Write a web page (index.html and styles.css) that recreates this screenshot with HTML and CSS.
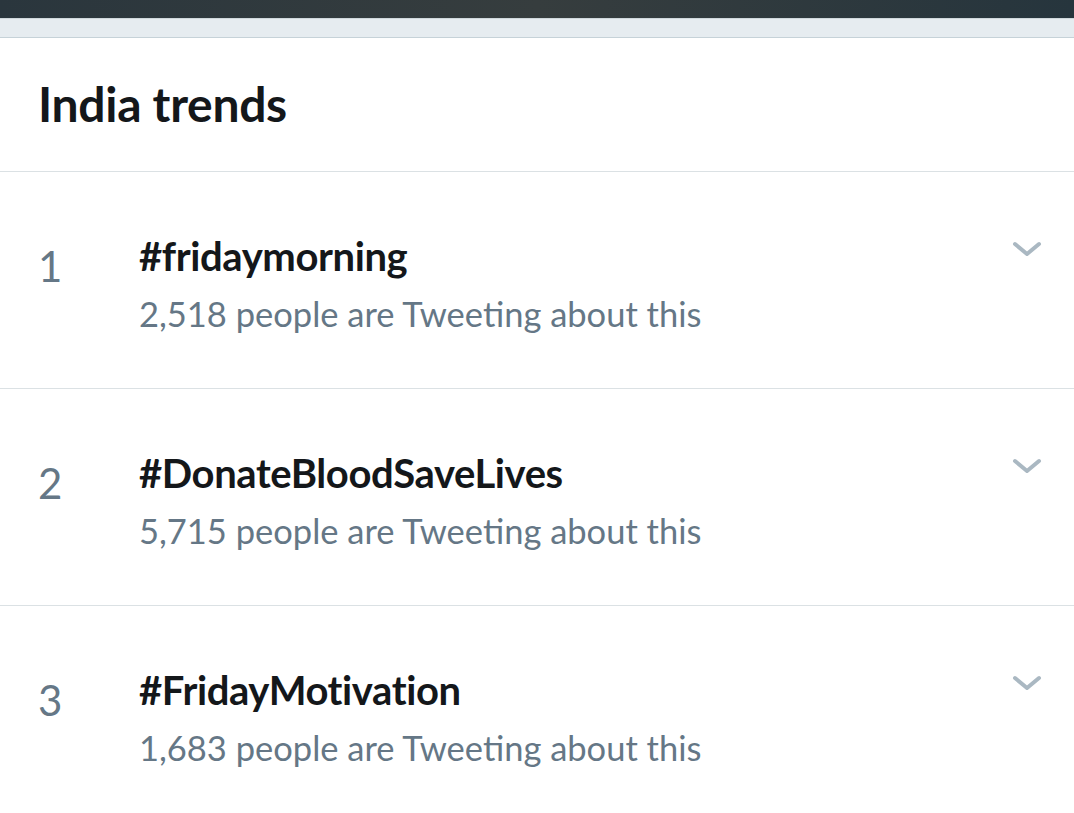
FILE: index.html
```html
<!DOCTYPE html>
<html>
<head>
<meta charset="utf-8">
<link rel="stylesheet" href="styles.css">
</head>
<body>
<div class="topbar"></div>
<div class="subbar"></div>
<main class="panel">
  <header class="panel-header"><h1 class="title">India trends</h1></header>
  <ul class="trends">
    <li class="trend">
      <span class="rank">1</span>
      <div class="info">
        <div class="tag">#fridaymorning</div>
        <div class="count">2,518 people are Tweeting about this</div>
      </div>
      <svg class="chev" viewBox="0 0 32 20" width="32" height="20"><path d="M4 4 L16 14 L28 4" fill="none" stroke="#aab8c2" stroke-width="4" stroke-linecap="round" stroke-linejoin="round"/></svg>
    </li>
    <li class="trend">
      <span class="rank">2</span>
      <div class="info">
        <div class="tag">#DonateBloodSaveLives</div>
        <div class="count">5,715 people are Tweeting about this</div>
      </div>
      <svg class="chev" viewBox="0 0 32 20" width="32" height="20"><path d="M4 4 L16 14 L28 4" fill="none" stroke="#aab8c2" stroke-width="4" stroke-linecap="round" stroke-linejoin="round"/></svg>
    </li>
    <li class="trend">
      <span class="rank">3</span>
      <div class="info">
        <div class="tag">#FridayMotivation</div>
        <div class="count">1,683 people are Tweeting about this</div>
      </div>
      <svg class="chev" viewBox="0 0 32 20" width="32" height="20"><path d="M4 4 L16 14 L28 4" fill="none" stroke="#aab8c2" stroke-width="4" stroke-linecap="round" stroke-linejoin="round"/></svg>
    </li>
  </ul>
</main>
</body>
</html>
```
FILE: styles.css
```css
* { box-sizing: border-box; }
html, body { margin: 0; padding: 0; background: #fff; }
body { font-family: "Lato", "Open Sans", sans-serif; overflow: hidden; }
.topbar { height: 18px; background: linear-gradient(90deg, #2a363d, #363d3e 50%, #26353d); }
.subbar { height: 20px; background: #e6ecf0; border-top: 1px solid #cfd8dc; border-bottom: 1px solid #c6d2d8; }
.panel-header { height: 134px; padding-left: 38px; border-bottom: 1px solid #dbe1e4; display: flex; align-items: center; }
.title { margin: 0 0 2px; font-size: 48px; font-weight: 700; color: #14171a; letter-spacing: -0.3px; }
.trends { list-style: none; margin: 0; padding: 0; }
.trend { height: 217px; border-bottom: 1px solid #dbe1e4; display: flex; align-items: flex-start; padding: 60px 31px 0 38px; }
.rank { width: 101px; font-size: 42px; color: #657786; line-height: 1; padding-top: 13px; }
.info { flex: 1; }
.tag { font-size: 40px; font-weight: 700; color: #14171a; line-height: 48px; letter-spacing: -0.4px; }
.count { font-size: 34.5px; color: #657786; line-height: 48px; margin-top: 10px; }
.chev { margin-top: 8px; }
```
